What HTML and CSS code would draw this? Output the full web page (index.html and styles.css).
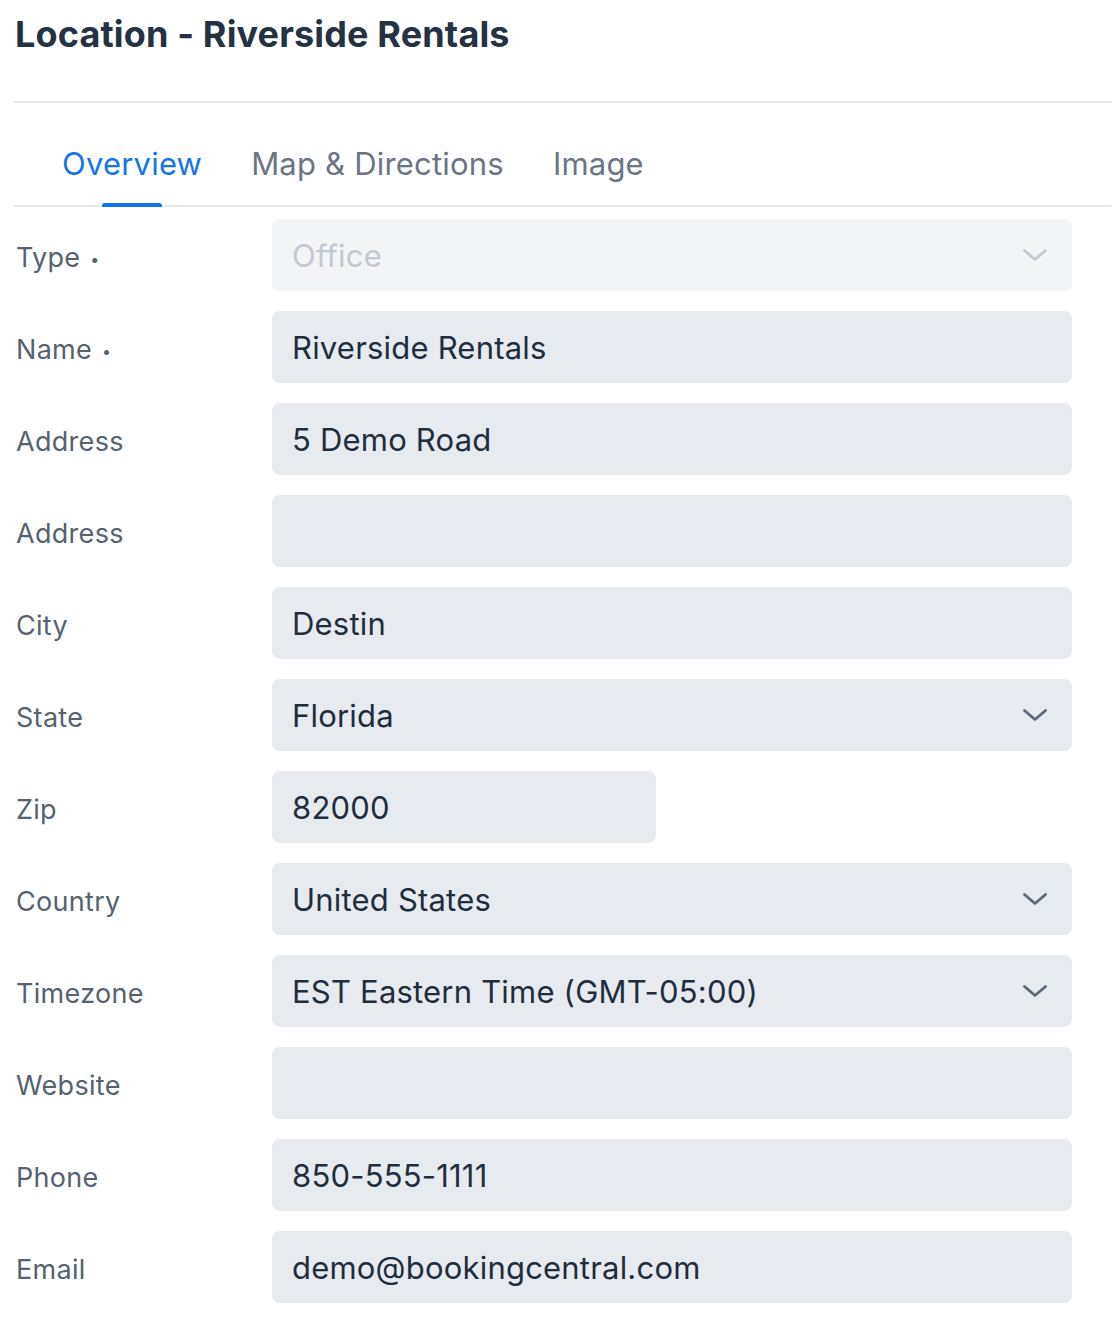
FILE: index.html
```html
<!DOCTYPE html>
<html>
<head>
<meta charset="utf-8">
<link rel="stylesheet" href="styles.css">
</head>
<body>
<div class="page">
  <header class="title-bar">
    <h1 class="title">Location - Riverside Rentals</h1>
  </header>
  <nav class="tabs">
    <div class="tab active">Overview</div>
    <div class="tab">Map &amp; Directions</div>
    <div class="tab">Image</div>
  </nav>
  <form class="form">
    <div class="row">
      <label class="label">Type <span class="req">•</span></label>
      <div class="field select disabled"><span class="value">Office</span>
        <svg class="chev" viewBox="0 0 24 12" width="24" height="12"><path d="M1.5 1.5 L12 10.5 L22.5 1.5" /></svg>
      </div>
    </div>
    <div class="row">
      <label class="label">Name <span class="req">•</span></label>
      <div class="field"><span class="value">Riverside Rentals</span></div>
    </div>
    <div class="row">
      <label class="label">Address</label>
      <div class="field"><span class="value">5 Demo Road</span></div>
    </div>
    <div class="row">
      <label class="label">Address</label>
      <div class="field"><span class="value"></span></div>
    </div>
    <div class="row">
      <label class="label">City</label>
      <div class="field"><span class="value">Destin</span></div>
    </div>
    <div class="row">
      <label class="label">State</label>
      <div class="field select"><span class="value">Florida</span>
        <svg class="chev" viewBox="0 0 24 12" width="24" height="12"><path d="M1.5 1.5 L12 10.5 L22.5 1.5" /></svg>
      </div>
    </div>
    <div class="row">
      <label class="label">Zip</label>
      <div class="field short"><span class="value">82000</span></div>
    </div>
    <div class="row">
      <label class="label">Country</label>
      <div class="field select"><span class="value">United States</span>
        <svg class="chev" viewBox="0 0 24 12" width="24" height="12"><path d="M1.5 1.5 L12 10.5 L22.5 1.5" /></svg>
      </div>
    </div>
    <div class="row">
      <label class="label">Timezone</label>
      <div class="field select"><span class="value">EST Eastern Time (GMT-05:00)</span>
        <svg class="chev" viewBox="0 0 24 12" width="24" height="12"><path d="M1.5 1.5 L12 10.5 L22.5 1.5" /></svg>
      </div>
    </div>
    <div class="row">
      <label class="label">Website</label>
      <div class="field"><span class="value"></span></div>
    </div>
    <div class="row">
      <label class="label">Phone</label>
      <div class="field"><span class="value">850-555-1111</span></div>
    </div>
    <div class="row">
      <label class="label">Email</label>
      <div class="field"><span class="value">demo@bookingcentral.com</span></div>
    </div>
  </form>
</div>
</body>
</html>
```

FILE: styles.css
```css
* { box-sizing: border-box; }
html, body { margin: 0; padding: 0; background: #ffffff; }
body {
  font-family: Inter, "Noto Sans", "Liberation Sans", sans-serif;
  color: #1f2d3d;
}
.page {
  margin-left: 14px;
}
.title-bar {
  height: 103px;
  border-bottom: 2px solid #e6e9ed;
  display: flex;
  align-items: flex-start;
}
.title {
  margin: 12px 0 0 1px;
  font-size: 36px;
  line-height: 44px;
  font-weight: 700;
  color: #243244;
  letter-spacing: 0.15px;
}
.tabs {
  display: flex;
  gap: 49px;
  padding-left: 48px;
  height: 104px;
  border-bottom: 2px solid #e6e9ed;
}
.tab {
  position: relative;
  font-size: 31px;
  line-height: 40px;
  padding-top: 41px;
  color: #6b7585;
  letter-spacing: 0.2px;
}
.tab.active {
  color: #1476e6;
}
.tab.active::after {
  content: "";
  position: absolute;
  left: 50%;
  bottom: -2px;
  width: 60px;
  height: 4px;
  margin-left: -30px;
  background: #1476e6;
  border-radius: 3px 3px 0 0;
}
.form {
  display: flex;
  flex-direction: column;
  gap: 20px;
  padding: 12px 0 0 2px;
}
.row {
  display: flex;
  align-items: center;
}
.label {
  width: 256px;
  flex: none;
  font-size: 27px;
  color: #56626f;
  padding-top: 4px;
  letter-spacing: 0.3px;
}
.req {
  font-size: 16px;
  vertical-align: middle;
  margin-left: 2px;
}
.field {
  width: 800px;
  height: 72px;
  background: #e7eaef;
  border-radius: 8px;
  display: flex;
  align-items: center;
  padding: 0 25px 0 20px;
}
.field.short { width: 384px; }
.field.disabled { background: #f3f4f6; }
.value {
  flex: 1;
  font-size: 31px;
  color: #1f2d3d;
  padding-top: 1px;
  letter-spacing: 0.2px;
}
.field.disabled .value { color: #c2c8d1; }
.chev {
  flex: none;
  fill: none;
  stroke: #5d6877;
  stroke-width: 2.8;
  stroke-linecap: round;
  stroke-linejoin: round;
}
.field.disabled .chev { stroke: #c2c8d1; }
```
